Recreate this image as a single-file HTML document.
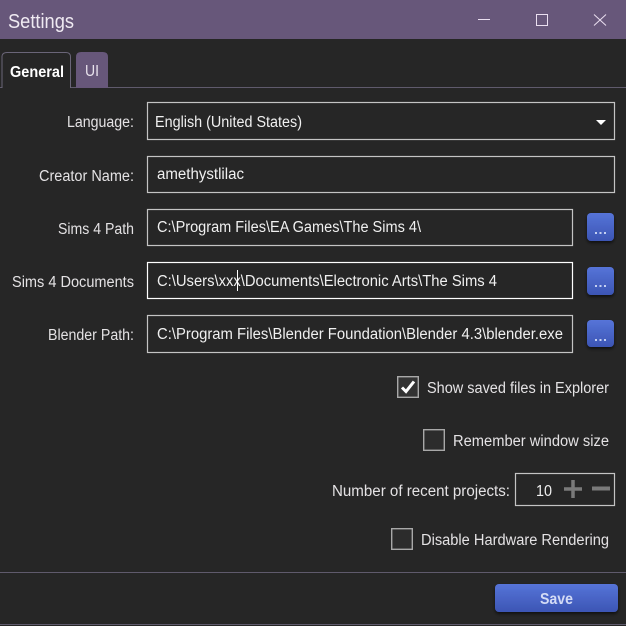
<!DOCTYPE html>
<html><head><meta charset="utf-8"><style>
html,body{margin:0;padding:0;background:#262626;overflow:hidden}
svg{display:block}
text{font-family:"Liberation Sans",sans-serif;font-size:15.5px;fill:#e4e2e4}
.b{fill:#262626;stroke:#c4c4c4;stroke-width:1.2}
</style></head><body>
<svg width="626" height="626" viewBox="0 0 626 626" xmlns="http://www.w3.org/2000/svg">
<defs>
<linearGradient id="g" x1="0" y1="0" x2="0" y2="1"><stop offset="0" stop-color="#5674d8"/><stop offset="1" stop-color="#3c55b4"/></linearGradient>
<filter id="s" x="-20%" y="-20%" width="140%" height="150%"><feDropShadow dx="0" dy="2" stdDeviation="1.5" flood-color="#000" flood-opacity=".6"/></filter>
</defs>
<rect width="626" height="626" fill="#262626"/>
<rect width="626" height="39" fill="#67577a"/>
<text x="8" y="28" textLength="66" lengthAdjust="spacingAndGlyphs" style="font-size:20px;fill:#efeaf2">Settings</text>
<rect x="478" y="19" width="12" height="1" fill="#eadff0"/>
<rect x="536.500" y="14.500" width="11" height="11" fill="none" stroke="#eadff0"/>
<path d="M594 14.500L606 25.500M606 14.500L594 25.500" stroke="#eadff0" stroke-width="1"/>

<rect x="0" y="87" width="626" height="1" fill="#5f5a6c"/>
<path d="M2 88V57Q2 52.500 7 52.500H66Q70.500 52.500 70.500 57V88" fill="#262626" stroke="#6a6578"/>
<rect x="3" y="86" width="67" height="3" fill="#262626"/>
<path d="M76 88V57Q76 52 81 52H103Q108 52 108 57V88Z" fill="#67577a"/>
<text x="10" y="77" textLength="54" lengthAdjust="spacingAndGlyphs" style="font-weight:700;fill:#fff">General</text>
<text x="85" y="76" textLength="14" lengthAdjust="spacingAndGlyphs" style="fill:#e8e2ec">UI</text>

<text x="67" y="127" textLength="67" lengthAdjust="spacingAndGlyphs">Language:</text>
<text x="39" y="181" textLength="95" lengthAdjust="spacingAndGlyphs">Creator Name:</text>
<text x="58" y="234" textLength="76" lengthAdjust="spacingAndGlyphs">Sims 4 Path</text>
<text x="12" y="287" textLength="122" lengthAdjust="spacingAndGlyphs">Sims 4 Documents</text>
<text x="48" y="340" textLength="86" lengthAdjust="spacingAndGlyphs">Blender Path:</text>

<rect class="b" x="147.500" y="102.500" width="467" height="37"/>
<text x="155" y="127" textLength="147" lengthAdjust="spacingAndGlyphs" style="fill:#f0f0f0">English (United States)</text>
<path d="M596 120H606L601 125Z" fill="#fff"/>

<rect class="b" x="147.500" y="156.500" width="467" height="36"/>
<text x="157" y="179" textLength="87" lengthAdjust="spacingAndGlyphs" style="fill:#f0f0f0">amethystlilac</text>

<rect class="b" x="147.500" y="209.500" width="425" height="36"/>
<text x="157" y="232" textLength="264" lengthAdjust="spacingAndGlyphs" style="fill:#f0f0f0">C:\Program Files\EA Games\The Sims 4\</text>

<rect class="b" x="147.500" y="262.500" width="425" height="36" style="stroke:#fff"/>
<text x="157" y="286" textLength="340" lengthAdjust="spacingAndGlyphs" style="fill:#f0f0f0">C:\Users\xxx\Documents\Electronic Arts\The Sims 4</text>
<rect x="237" y="270" width="1" height="21" fill="#fff"/>

<rect class="b" x="147.500" y="315.500" width="425" height="37"/>
<text x="157" y="339" textLength="406" lengthAdjust="spacingAndGlyphs" style="fill:#f0f0f0">C:\Program Files\Blender Foundation\Blender 4.3\blender.exe</text>

<g filter="url(#s)">
<rect x="587" y="213" width="27" height="28" rx="4" fill="url(#g)"/>
<rect x="587" y="267" width="27" height="28" rx="4" fill="url(#g)"/>
<rect x="587" y="320" width="27" height="27" rx="4" fill="url(#g)"/>
</g>
<path d="M595 232h2v2h-2zM599.500 232h2v2h-2zM604 232h2v2h-2zM595 285h2v2h-2zM599.500 285h2v2h-2zM604 285h2v2h-2zM595 339h2v2h-2zM599.500 339h2v2h-2zM604 339h2v2h-2z" fill="#c5d0f2"/>

<rect x="397.700" y="376.700" width="20.600" height="20.600" fill="#333" stroke="#a8a8a8" stroke-width="1.400"/>
<path d="M402 387.500L406 391.500L414 381.500" fill="none" stroke="#fff" stroke-width="3"/>
<text x="427" y="393" textLength="182" lengthAdjust="spacingAndGlyphs">Show saved files in Explorer</text>

<rect x="423.700" y="429.700" width="20.600" height="20.600" fill="#2c2c2c" stroke="#a8a8a8" stroke-width="1.400"/>
<text x="453" y="446" textLength="156" lengthAdjust="spacingAndGlyphs">Remember window size</text>

<text x="332" y="496" textLength="178" lengthAdjust="spacingAndGlyphs">Number of recent projects:</text>
<rect class="b" x="515.500" y="473.500" width="99" height="32"/>
<text x="536" y="496" textLength="16" lengthAdjust="spacingAndGlyphs" style="fill:#f0f0f0">10</text>
<path d="M564 489H582M573 480V498" stroke="#7a7a7a" stroke-width="3.500"/>
<path d="M592 488.500H610" stroke="#7a7a7a" stroke-width="4"/>

<rect x="391.700" y="528.700" width="20.600" height="20.600" fill="#2c2c2c" stroke="#a8a8a8" stroke-width="1.400"/>
<text x="421" y="545" textLength="188" lengthAdjust="spacingAndGlyphs">Disable Hardware Rendering</text>

<rect x="0" y="572" width="626" height="1" fill="#5f5a6c"/>
<rect x="495" y="584" width="123" height="28" rx="4" fill="url(#g)" filter="url(#s)"/>
<text x="540" y="604" textLength="33" lengthAdjust="spacingAndGlyphs" style="font-weight:700;fill:#d3dbf5">Save</text>
<rect x="0" y="624" width="626" height="1" fill="#5f5a6c"/>
</svg>
</body></html>
